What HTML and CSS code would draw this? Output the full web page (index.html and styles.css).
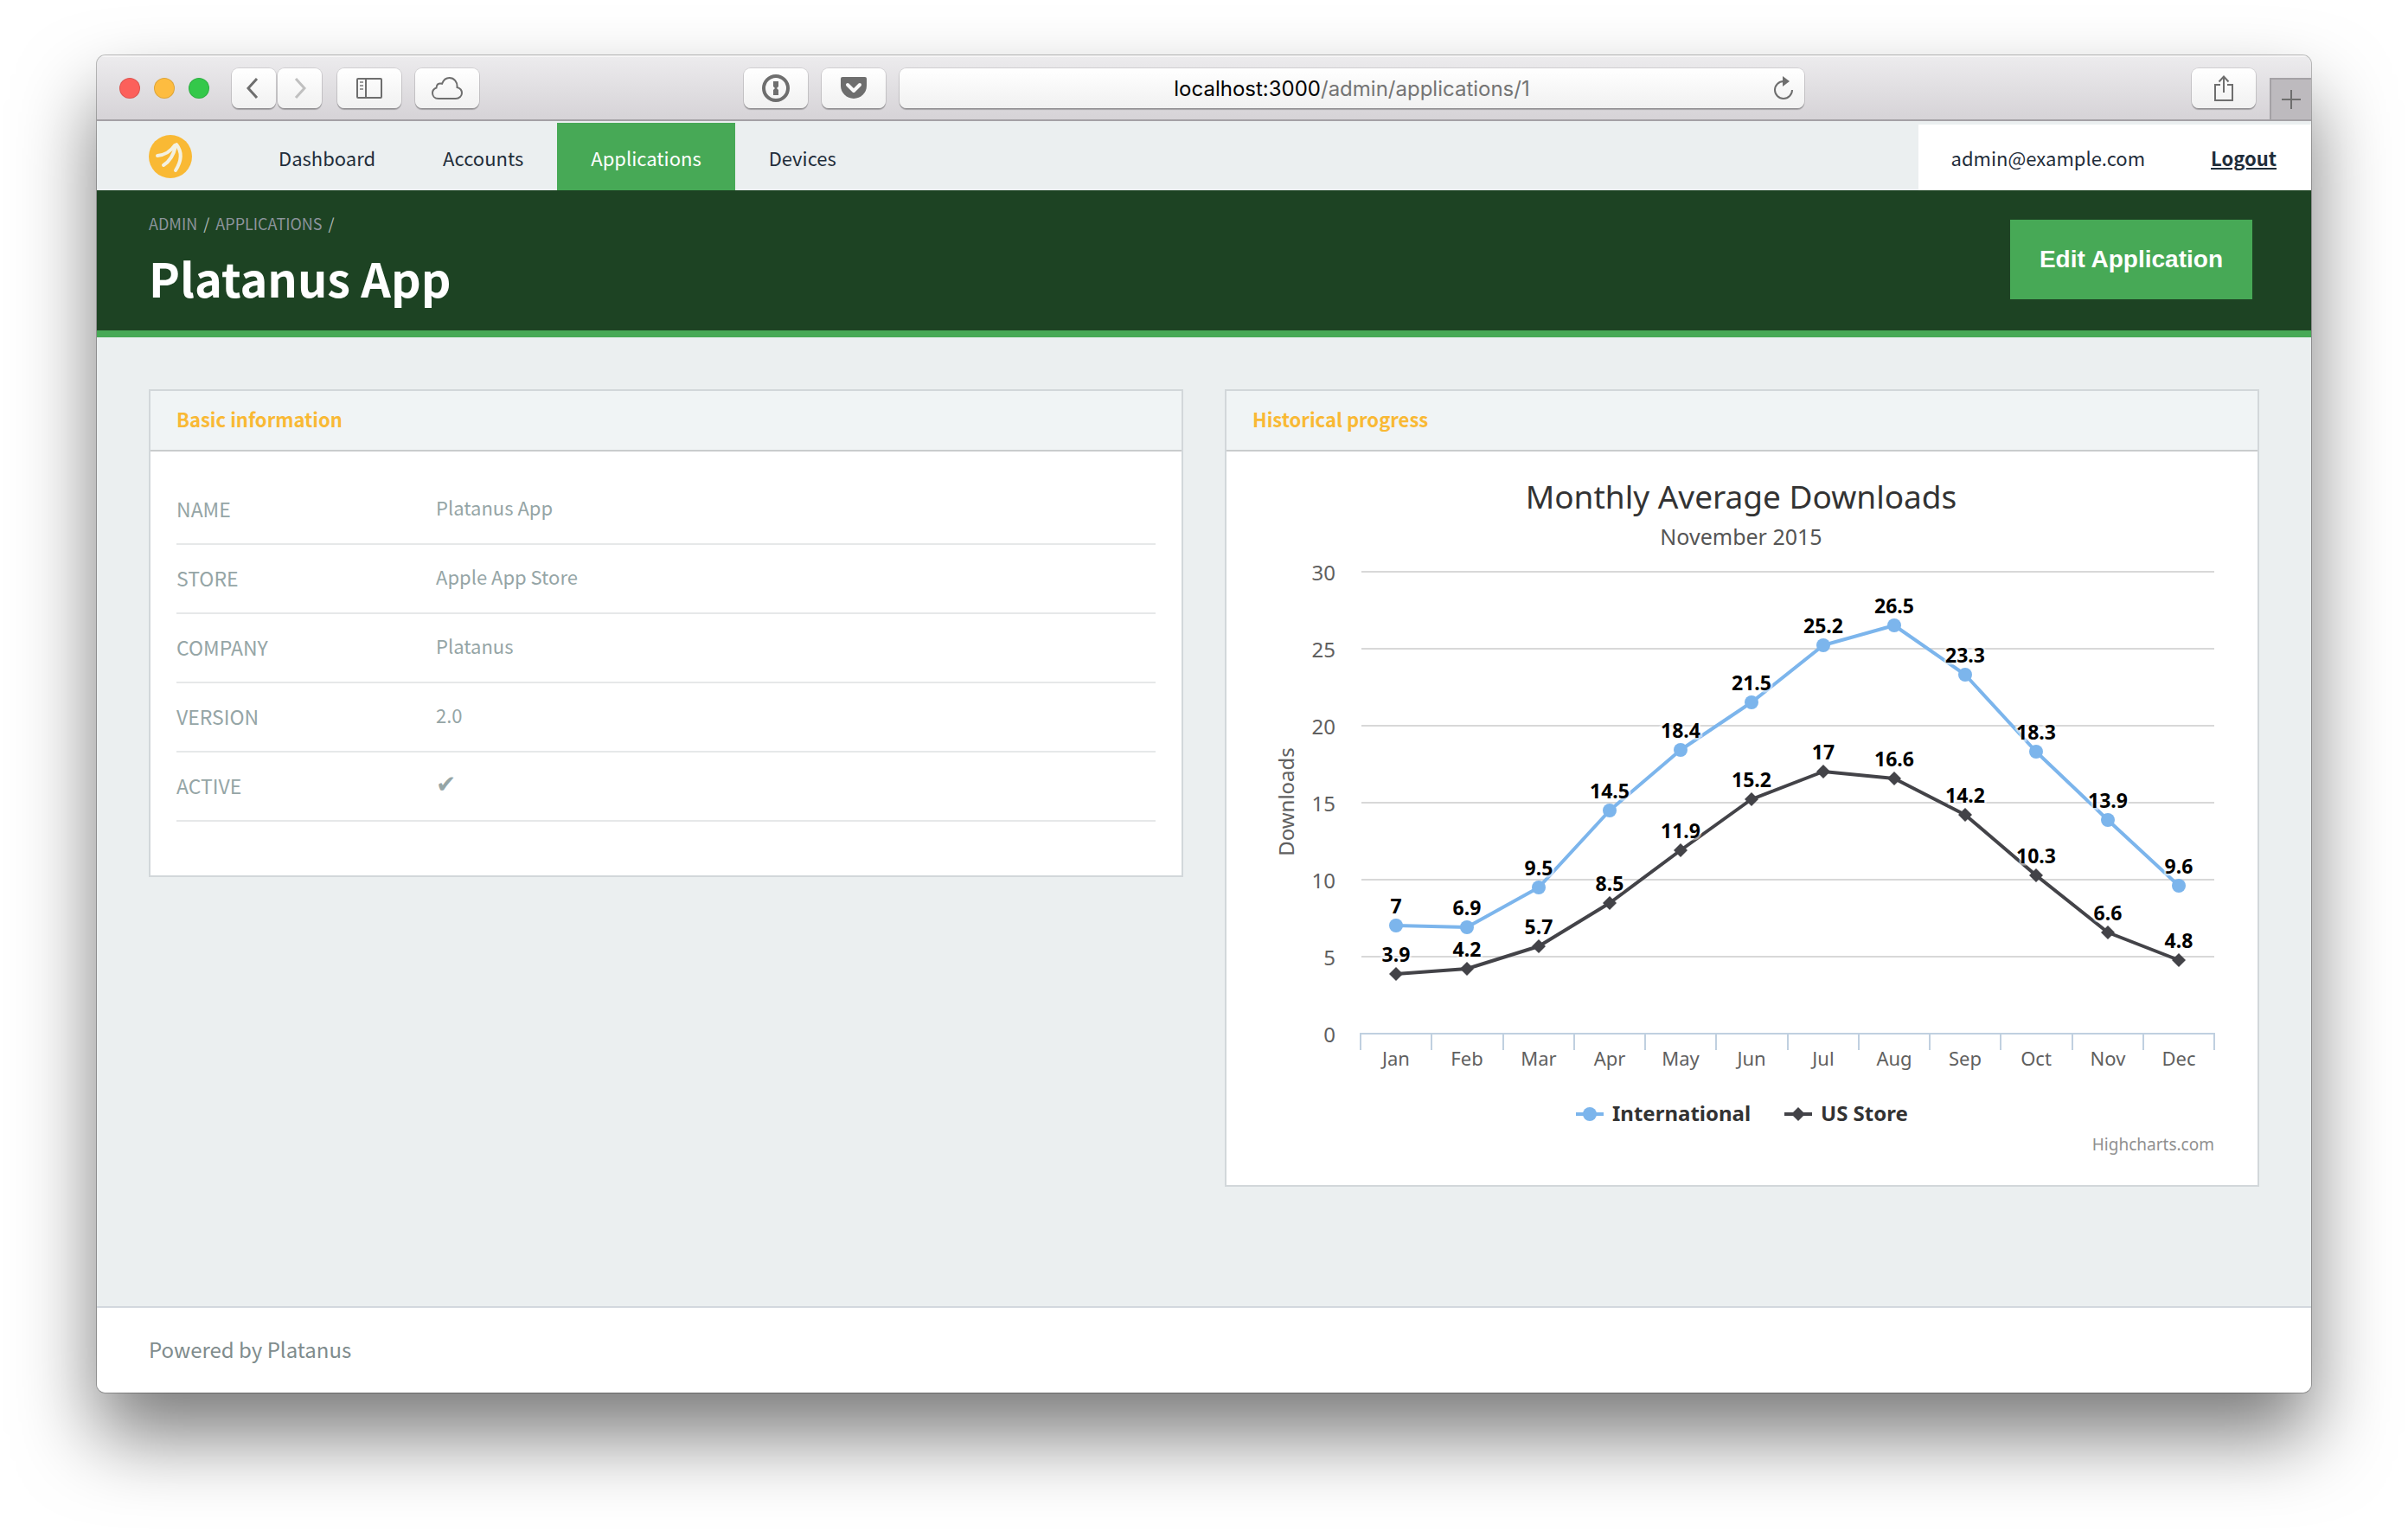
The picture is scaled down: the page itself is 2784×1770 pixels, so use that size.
FILE: index.html
```html
<!DOCTYPE html>
<html lang="en">
<head>
<meta charset="utf-8">
<title>Platanus App</title>
<link rel="stylesheet" href="styles.css">
</head>
<body>
<div class="window">
  <div class="toolbar">
    <div class="toolbar-left">
      <div class="lights"><span class="light red"></span><span class="light yellow"></span><span class="light green"></span></div>
      <div class="history">
        <button class="tool narrow back" aria-label="Back"><svg width="14" height="24" viewBox="0 0 14 24"><path d="M12 1 2 12l10 11" fill="none" stroke="#6e6e6e" stroke-width="3"/></svg></button>
        <button class="tool narrow" aria-label="Forward"><svg width="14" height="24" viewBox="0 0 14 24"><path d="M2 1l10 11L2 23" fill="none" stroke="#c0c0c0" stroke-width="3"/></svg></button>
      </div>
      <button class="tool" aria-label="Sidebar"><svg width="30" height="24" viewBox="0 0 30 24"><g fill="none" stroke="#6e6e6e" stroke-width="2"><rect x="1" y="1" width="28" height="22" rx="1"/><path d="M11 1v22"/><path d="M4 5h4M4 9h4M4 13h4" stroke="#999"/></g></svg></button>
      <button class="tool" aria-label="iCloud tabs"><svg width="36" height="26" viewBox="0 0 36 26"><path d="M8 25C3.500 25 1 22 1 18.500C1 15.500 2.800 13.500 5.500 12.500C5.500 8.500 8.500 6.500 12 7.800C13.500 4 16.500 1 20.500 1C26 1 30 5.500 29.500 12C33 13 35 15.200 35 18.500C35 22 32 25 28 25Z" fill="none" stroke="#6e6e6e" stroke-width="2"/></svg></button>
    </div>
    <div class="toolbar-center">
      <button class="tool" aria-label="Passwords"><svg width="32" height="32" viewBox="0 0 32 32"><circle cx="16" cy="16" r="14" fill="none" stroke="#6e6e6e" stroke-width="4"/><path d="M13 8h6v6l-2 2 2 2v6h-6v-6l2-2-2-2z" fill="#6e6e6e"/></svg></button>
      <button class="tool" aria-label="Save to Pocket"><svg width="30" height="26" viewBox="0 0 30 26"><path d="M2 0h26a2 2 0 0 1 2 2v8a15 15 0 0 1-30 0V2a2 2 0 0 1 2-2z" fill="#6e6e6e"/><path d="M8 9l7 7 7-7" fill="none" stroke="#fafafa" stroke-width="4" stroke-linecap="round" stroke-linejoin="round"/></svg></button>
      <div class="address">
        <span class="url" role="textbox" aria-label="Address"><span class="host">localhost:3000</span>/admin/applications/1</span>
        <button class="reload" aria-label="Reload"><svg width="24" height="28" viewBox="0 0 24 28"><path d="M12 6a10 10 0 1 0 10 10" fill="none" stroke="#6e6e6e" stroke-width="2"/><path d="M11 0l8 6-8 6z" fill="#6e6e6e"/></svg></button>
      </div>
    </div>
    <div class="toolbar-right">
      <button class="tool" aria-label="Share"><svg width="24" height="32" viewBox="0 0 24 32"><path d="M8 12H2v18h20V12h-6M12 21V3M6.500 8.500 12 2.500l5.500 6" fill="none" stroke="#6e6e6e" stroke-width="2"/></svg></button>
      <button class="new-tab" aria-label="New tab"><svg width="22" height="22" viewBox="0 0 22 22"><path d="M11 0v22M0 11h22" stroke="#6e6e6e" stroke-width="2"/></svg></button>
    </div>
  </div>

  <nav class="nav">
    <a class="logo" href="#" aria-label="Home"><svg width="50" height="50" viewBox="0 0 50 50"><circle cx="25" cy="25" r="25" fill="#f9b934"/><g fill="none" stroke="#f3f1e2" stroke-width="4" stroke-linecap="round"><path d="M30 12C26 18 20 23 10 24"/><path d="M31 13C29 22 25 30 17 35"/><path d="M32 11C39 20 38 30 31 41"/></g></svg></a>
    <a class="tab" href="#">Dashboard</a>
    <a class="tab" href="#">Accounts</a>
    <a class="tab active" href="#">Applications</a>
    <a class="tab" href="#">Devices</a>
    <div class="user"><span>admin@example.com</span><a class="logout" href="#">Logout</a></div>
  </nav>

  <header class="header">
    <div>
      <div class="crumbs"><a href="#">ADMIN</a><span>/</span><a href="#">APPLICATIONS</a><span>/</span></div>
      <h1 class="title">Platanus App</h1>
    </div>
    <button class="edit">Edit Application</button>
  </header>

  <main class="main">
    <section class="panel">
      <h2 class="panel-title">Basic information</h2>
      <div class="panel-body">
        <table class="info">
          <tr><th scope="row">NAME</th><td>Platanus App</td></tr>
          <tr><th scope="row">STORE</th><td>Apple App Store</td></tr>
          <tr><th scope="row">COMPANY</th><td>Platanus</td></tr>
          <tr><th scope="row">VERSION</th><td>2.0</td></tr>
          <tr><th scope="row">ACTIVE</th><td><span class="check">✔</span></td></tr>
        </table>
      </div>
    </section>
    <section class="panel">
      <h2 class="panel-title">Historical progress</h2>
      <svg class="chart" id="chart" viewBox="0 0 1192 848" role="img" aria-label="Monthly Average Downloads">
        <text class="chart-title" x="595" y="66">Monthly Average Downloads</text>
        <text class="chart-subtitle" x="595" y="108">November 2015</text>
        <text class="axis" transform="translate(78 405) rotate(-90)">Downloads</text>
        <g id="plot"></g>
        <path d="M404 766h32" stroke="#7cb5ec" stroke-width="4"/><circle cx="420" cy="766" r="8" fill="#7cb5ec"/>
        <text class="legend" x="446" y="774">International</text>
        <path d="M645 766h32" stroke="#434348" stroke-width="4"/><path d="M661 758l8 8-8 8-8-8z" fill="#434348"/>
        <text class="legend" x="687" y="774">US Store</text>
        <a href="#"><text class="credits" x="1142" y="808">Highcharts.com</text></a>
      </svg>
    </section>
  </main>

  <footer class="footer">Powered by Platanus</footer>
</div>
<script src="chart.js"></script>
</body>
</html>
```
FILE: styles.css
```css
* { box-sizing: border-box; }
body {
  margin: 0;
  min-height: 100vh;
  padding: 64px 112px 160px;
  background: #fff;
  color: #1f2d3a;
  font: 22px/32px "Noto Sans CJK SC", "Noto Sans", sans-serif;
}
a { color: inherit; text-decoration: none; }
button { margin: 0; border: 0; padding: 0; font: inherit; }
svg { display: block; }

.window {
  display: flex;
  flex-direction: column;
  min-height: calc(100vh - 224px);
  border-radius: 10px;
  overflow: hidden;
  background: #ebeff0;
  box-shadow: 0 0 0 1px rgba(0, 0, 0, .25), 0 50px 90px rgba(0, 0, 0, .52);
}

/* browser toolbar */
.toolbar {
  display: grid;
  grid-template-columns: 748fr 1226fr 586fr;
  height: 76px;
  border-top: 2px solid #f6f5f6;
  border-bottom: 2px solid #a4a1a5;
  background: linear-gradient(#ecebed, #d6d3d7);
}
.toolbar-left, .toolbar-center { display: flex; align-items: center; gap: 16px; }
.toolbar-left { padding-left: 26px; }
.toolbar-right { display: flex; justify-content: flex-end; align-items: center; gap: 16px; }
.lights { display: flex; gap: 16px; margin-right: 10px; }
.light { width: 24px; height: 24px; border: 1px solid rgba(0, 0, 0, .12); border-radius: 50%; }
.red { background: #fc605b; }
.yellow { background: #fdbc40; }
.green { background: #34c84a; }
.history { display: flex; gap: 2px; margin-right: 2px; }
.tool, .address {
  display: flex;
  align-items: center;
  justify-content: center;
  height: 46px;
  border-radius: 8px;
  background: linear-gradient(#fff, #f1f1f1);
  box-shadow: 0 0 0 1px rgba(0, 0, 0, .1), 0 2px 1px rgba(0, 0, 0, .25);
}
.tool { flex: none; width: 74px; }
.narrow { width: 51px; }
.back { padding-right: 4px; }
.address { flex: 1; padding: 0 12px 0 36px; }
.url { flex: 1; padding-top: 2px; text-align: center; font: 24px/32px Inter, sans-serif; color: #747474; white-space: nowrap; }
.host { color: #000; }
.reload { background: none; }
.new-tab {
  display: flex;
  align-items: center;
  justify-content: center;
  align-self: flex-end;
  width: 48px;
  height: 48px;
  border-top: 2px solid #a4a1a5;
  border-left: 2px solid #a4a1a5;
  background: #bdbabe;
}

/* site navigation */
.nav { display: flex; align-items: stretch; height: 80px; padding-left: 60px; }
.logo { margin: 16px 61px 0 0; }
.tab { margin-top: 2px; padding: 24px 39px 0; }
.active { background: #47a956; color: #fff; }
.user { display: flex; gap: 76px; margin-top: 4px; margin-left: auto; padding: 22px 40px 0 38px; background: #fff; }
.logout { font-weight: 700; text-decoration: underline; }

.header {
  display: flex;
  justify-content: space-between;
  align-items: flex-start;
  height: 170px;
  padding: 0 68px 0 60px;
  border-bottom: 8px solid #47a956;
  background: #1d4323;
}
.crumbs { display: flex; gap: 7px; padding-top: 26px; color: #8c949c; font-size: 18px; line-height: 24px; }
.crumbs span { color: #b4bcbc; }
.title { margin: 11px 0 0; color: #fff; font-size: 54px; line-height: 80px; }
.edit {
  height: 92px;
  margin-top: 34px;
  padding: 0 34px;
  background: #47a956;
  color: #fff;
  font: bold 28px/32px "Liberation Sans", sans-serif;
}

/* panels */
.main { display: grid; grid-template-columns: 1fr 1fr; align-items: start; gap: 48px; flex: 1; padding: 60px; }
.panel { border: 2px solid #d2d7da; background: #fff; }
.panel-title {
  margin: 0;
  padding: 16px 30px 20px;
  border-bottom: 2px solid #c9cccd;
  background: #f0f4f5;
  color: #f9b934;
  font-size: 22px;
  line-height: 32px;
}
.panel-body { padding: 28px 30px 62px; }
.info { width: 100%; border-spacing: 0; color: #95a5a6; }
.info th, .info td { height: 80px; border-bottom: 2px solid #e6e8e9; }
.info th { width: 300px; padding: 0 0 2px; text-align: left; font-weight: 400; font-size: 23px; }
.info td { padding: 0 0 6px; }
.check { font-family: "DejaVu Sans", sans-serif; font-size: 28px; font-weight: 700; }

/* chart */
.chart { width: 100%; height: auto; font-family: "Noto Sans", sans-serif; font-size: 24px; }
.chart text { text-anchor: middle; fill: #606060; }
.chart .chart-title { font-size: 37px; fill: #333; }
.chart .chart-subtitle { font-size: 25px; fill: #555; }
.chart .month { font-size: 22px; }
.chart .tick { text-anchor: end; }
.chart .value { font-size: 23px; font-weight: 700; fill: #000; stroke: rgba(255, 255, 255, .5); stroke-width: 5px; paint-order: stroke; }
.chart .legend { text-anchor: start; font-weight: 700; fill: #333; }
.chart .credits { text-anchor: end; font-size: 19px; fill: #909090; }

.footer {
  height: 100px;
  padding: 32px 60px;
  border-top: 2px solid #d2d7de;
  background: #fff;
  color: #7f8c8d;
  font-size: 24px;
  line-height: 32px;
}
```
FILE: chart.js
```js
const months = ['Jan', 'Feb', 'Mar', 'Apr', 'May', 'Jun', 'Jul', 'Aug', 'Sep', 'Oct', 'Nov', 'Dec'];
const series = [
  { color: '#7cb5ec', shape: 'circle', data: [7, 6.9, 9.5, 14.5, 18.4, 21.5, 25.2, 26.5, 23.3, 18.3, 13.9, 9.6] },
  { color: '#434348', shape: 'diamond', data: [3.9, 4.2, 5.7, 8.5, 11.9, 15.2, 17, 16.6, 14.2, 10.3, 6.6, 4.8] }
];
const left = 155, right = 1142, zero = 673, unit = 17.8;
const step = (right - left) / months.length;
const px = i => Math.round(left + step * (i + 0.5));
const py = v => Math.round(zero - v * unit);

let out = '';
for (let v = 0; v <= 30; v += 5) {
  const y = py(v);
  if (v) out += `<path d="M${left + 1} ${y}H${right}" stroke="#d8d8d8" stroke-width="2"/>`;
  out += `<text class="tick" x="126" y="${y + 10}">${v}</text>`;
}
out += `<path d="M${left - 1} ${zero}H${right + 1}" stroke="#c0d0e0" stroke-width="2"/>`;
for (let i = 0; i <= months.length; i++) {
  out += `<path d="M${Math.round(left + step * i)} ${zero}v19" stroke="#c0d0e0" stroke-width="2"/>`;
}
months.forEach((m, i) => { out += `<text class="month" x="${px(i)}" y="710">${m}</text>`; });
series.forEach(s => {
  const points = s.data.map((v, i) => [px(i), py(v)]);
  out += `<polyline points="${points.join(' ')}" fill="none" stroke="${s.color}" stroke-width="4" stroke-linejoin="round"/>`;
  points.forEach(([x, y]) => {
    out += s.shape === 'circle'
      ? `<circle cx="${x}" cy="${y}" r="8" fill="${s.color}"/>`
      : `<path d="M${x} ${y - 8}l8 8-8 8-8-8z" fill="${s.color}"/>`;
  });
});
series.forEach(s => s.data.forEach((v, i) => {
  out += `<text class="value" x="${px(i)}" y="${py(v) - 14}">${v}</text>`;
}));
document.getElementById('plot').innerHTML = out;
```
